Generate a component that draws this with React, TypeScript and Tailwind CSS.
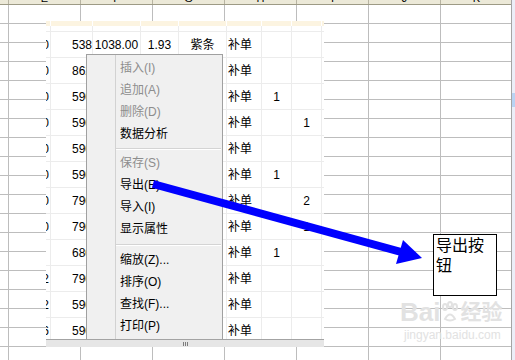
import React from 'react';

type Row = { a: string; n: string; p?: string; r?: string; c?: string; t: string; x?: string; y?: string };

const sheetCols = ['E', 'F', 'G', 'H', 'I', 'J', 'K'];

const rows: Row[] = [
  { a: '0', n: '538', p: '1038.00', r: '1.93', c: '紫条', t: '补单' },
  { a: '0', n: '862', t: '补单' },
  { a: '0', n: '590', t: '补单', x: '1' },
  { a: '0', n: '590', t: '补单', y: '1' },
  { a: '0', n: '590', t: '补单' },
  { a: '0', n: '590', t: '补单', x: '1' },
  { a: '0', n: '790', t: '补单', y: '2' },
  { a: '0', n: '790', t: '补单', y: '1' },
  { a: '', n: '680', t: '补单', x: '1' },
  { a: '2', n: '790', t: '补单' },
  { a: '2', n: '590', t: '补单' },
  { a: '6', n: '590', t: '补单' },
];

type Item = { label: string; off?: boolean } | { sep: number };

const menu: Item[] = [
  { label: '插入(I)', off: true },
  { label: '追加(A)', off: true },
  { label: '删除(D)', off: true },
  { label: '数据分析' },
  { sep: 7 },
  { label: '保存(S)', off: true },
  { label: '导出(E)' },
  { label: '导入(I)' },
  { label: '显示属性' },
  { sep: 9 },
  { label: '缩放(Z)...' },
  { label: '排序(O)' },
  { label: '查找(F)...' },
  { label: '打印(P)' },
];

const ContextMenu: React.FC = () => (
  <div className="absolute left-[40px] top-[33px] flex h-[320px] w-[137px] border border-[#a0a0a0] bg-[#f0f0f0]">
    <div className="w-[29px] shrink-0 border-r border-[#d2d2d2]" />
    <div className="flex flex-1 flex-col pl-[4px] pt-[2px]">
      {menu.map((it, i) =>
        'sep' in it ? (
          <div key={i} className="flex flex-col justify-center pr-[1px]" style={{ height: it.sep }}>
            <div className="ml-[-4px] h-px bg-[#d4d4d4]" />
            <div className="ml-[-4px] h-px bg-white" />
          </div>
        ) : (
          <div
            key={i}
            className={`h-[22px] text-[12px] leading-[22px] ${it.off ? 'text-[#8d8d8d]' : 'text-black'}`}
          >
            {it.label}
          </div>
        )
      )}
    </div>
  </div>
);

const Panel: React.FC = () => (
  <div className="absolute left-[46px] top-[21px] flex h-[326px] w-[278px] flex-col bg-white">
    <div className="relative flex-1 overflow-hidden">
      {/* embedded sheet header */}
      <div className="flex h-[5px] bg-[#fcf4e1]">
        <div className="w-[5px] border-r border-white" />
        <div className="w-[42px] border-r border-white" />
        <div className="w-[48px] border-r border-white" />
        <div className="w-[38px] border-r border-white" />
        <div className="w-[48px] border-r border-white" />
        <div className="w-[35px] border-r border-white" />
        <div className="w-[30px] border-r border-white" />
        <div className="w-[30px] border-r border-white" />
      </div>
      <div className="flex h-[6px] border-b border-[#ececec]">
        <div className="w-[5px] border-r border-[#ececec]" />
        <div className="w-[42px] border-r border-[#ececec]" />
        <div className="w-[48px] border-r border-[#ececec]" />
        <div className="w-[38px] border-r border-[#ececec]" />
        <div className="w-[48px] border-r border-[#ececec]" />
        <div className="w-[35px] border-r border-[#ececec]" />
        <div className="w-[30px] border-r border-[#ececec]" />
        <div className="w-[30px] border-r border-[#ececec]" />
      </div>
      {rows.map((r, i) => (
        <div key={i} className="flex h-[26px] border-b border-[#ececec] text-[12px] text-black">
          <div className="flex w-[5px] items-center justify-end overflow-hidden border-r border-[#ececec]">
            <span className="mr-[1px]">{r.a}</span>
          </div>
          <div className="flex w-[42px] items-center justify-end border-r border-[#ececec]">{r.n}</div>
          <div className="flex w-[48px] items-center justify-center border-r border-[#ececec]">{r.p}</div>
          <div className="flex w-[38px] items-center justify-center border-r border-[#ececec]">{r.r}</div>
          <div className="flex w-[48px] items-center justify-center border-r border-[#ececec]">{r.c}</div>
          <div className="flex w-[35px] items-center border-r border-[#ececec] pl-[1px]">{r.t}</div>
          <div className="flex w-[30px] items-center justify-center border-r border-[#ececec]">{r.x}</div>
          <div className="flex w-[30px] items-center justify-center border-r border-[#ececec]">{r.y}</div>
        </div>
      ))}
      <ContextMenu />
    </div>
    {/* horizontal scrollbar */}
    <div className="flex h-[8px] shrink-0 items-center justify-center border-t border-[#a3a3a3] bg-[#e6e6e6]">
      <div className="flex h-[4px] gap-[1px]">
        <div className="w-px bg-[#7d7d7d]" />
        <div className="w-px bg-[#7d7d7d]" />
        <div className="w-px bg-[#7d7d7d]" />
      </div>
    </div>
  </div>
);

const Watermark: React.FC = () => (
  <div className="pointer-events-none absolute left-[400px] top-[296px] flex flex-col text-[#e2e2e2]">
    <div className="flex items-center">
      <span className="text-[26px] font-bold leading-[32px]">Bai</span>
      <svg width="18" height="22" viewBox="0 0 18 22" className="mx-[1px]">
        <g fill="none" stroke="#e2e2e2" strokeWidth="2">
          <ellipse cx="4" cy="6" rx="2" ry="3" />
          <ellipse cx="9" cy="3.5" rx="2" ry="2.5" />
          <ellipse cx="14" cy="6" rx="2" ry="3" />
          <path d="M4 18 Q9 9 14 18 Q9 21 4 18Z" />
        </g>
      </svg>
      <span className="text-[21px] font-bold leading-[32px]">经验</span>
    </div>
    <span className="ml-[4px] text-[12px] leading-[14px]">jingyan.baidu.com</span>
  </div>
);

export default function App() {
  return (
    <div className="relative flex h-[360px] w-[515px] overflow-hidden bg-white font-['Liberation_Sans','Noto_Sans_CJK_SC',sans-serif]">
      {/* background sheet */}
      <div className="flex w-[511px] shrink-0 flex-col">
        <div className="flex h-[5px] shrink-0 border-b border-[#9d9a85] bg-[#ece9d8]">
          <div className="w-[9px] shrink-0 border-r border-[#b8b4a2]" />
          {sheetCols.map((c) => (
            <div
              key={c}
              className="flex w-[72px] shrink-0 items-end justify-center overflow-hidden border-r border-[#b8b4a2] text-[11px] leading-[12px] text-black"
            >
              {c}
            </div>
          ))}
        </div>
        {Array.from({ length: 19 }).map((_, i) => (
          <div key={i} className="flex h-[19px] shrink-0 border-b border-[#bdbdbd]">
            <div className="w-[9px] shrink-0 border-r border-[#bdbdbd]" />
            {sheetCols.map((c) => (
              <div key={c} className="w-[72px] shrink-0 border-r border-[#bdbdbd]" />
            ))}
          </div>
        ))}
      </div>
      {/* vertical scrollbar */}
      <div className="flex w-[4px] shrink-0 flex-col border-l border-[#a5a5a5] bg-[#eceef8]">
        <div className="h-[93px]" />
        <div className="h-[14px] bg-[#b9d3f3]" />
      </div>

      <Panel />

      <Watermark />

      {/* arrow */}
      <svg className="pointer-events-none absolute left-0 top-0" width="515" height="360">
        <line x1="153" y1="184" x2="405" y2="253" stroke="#0000ff" strokeWidth="8" />
        <polygon points="403,240 422,258 396,264" fill="#0000ff" />
      </svg>

      {/* callout box */}
      <div className="absolute left-[433px] top-[234px] h-[62px] w-[64px] border border-black bg-white pl-[2px] pt-[1px] text-[16px] leading-[20px] text-black">
        导出按钮
      </div>
    </div>
  );
}
